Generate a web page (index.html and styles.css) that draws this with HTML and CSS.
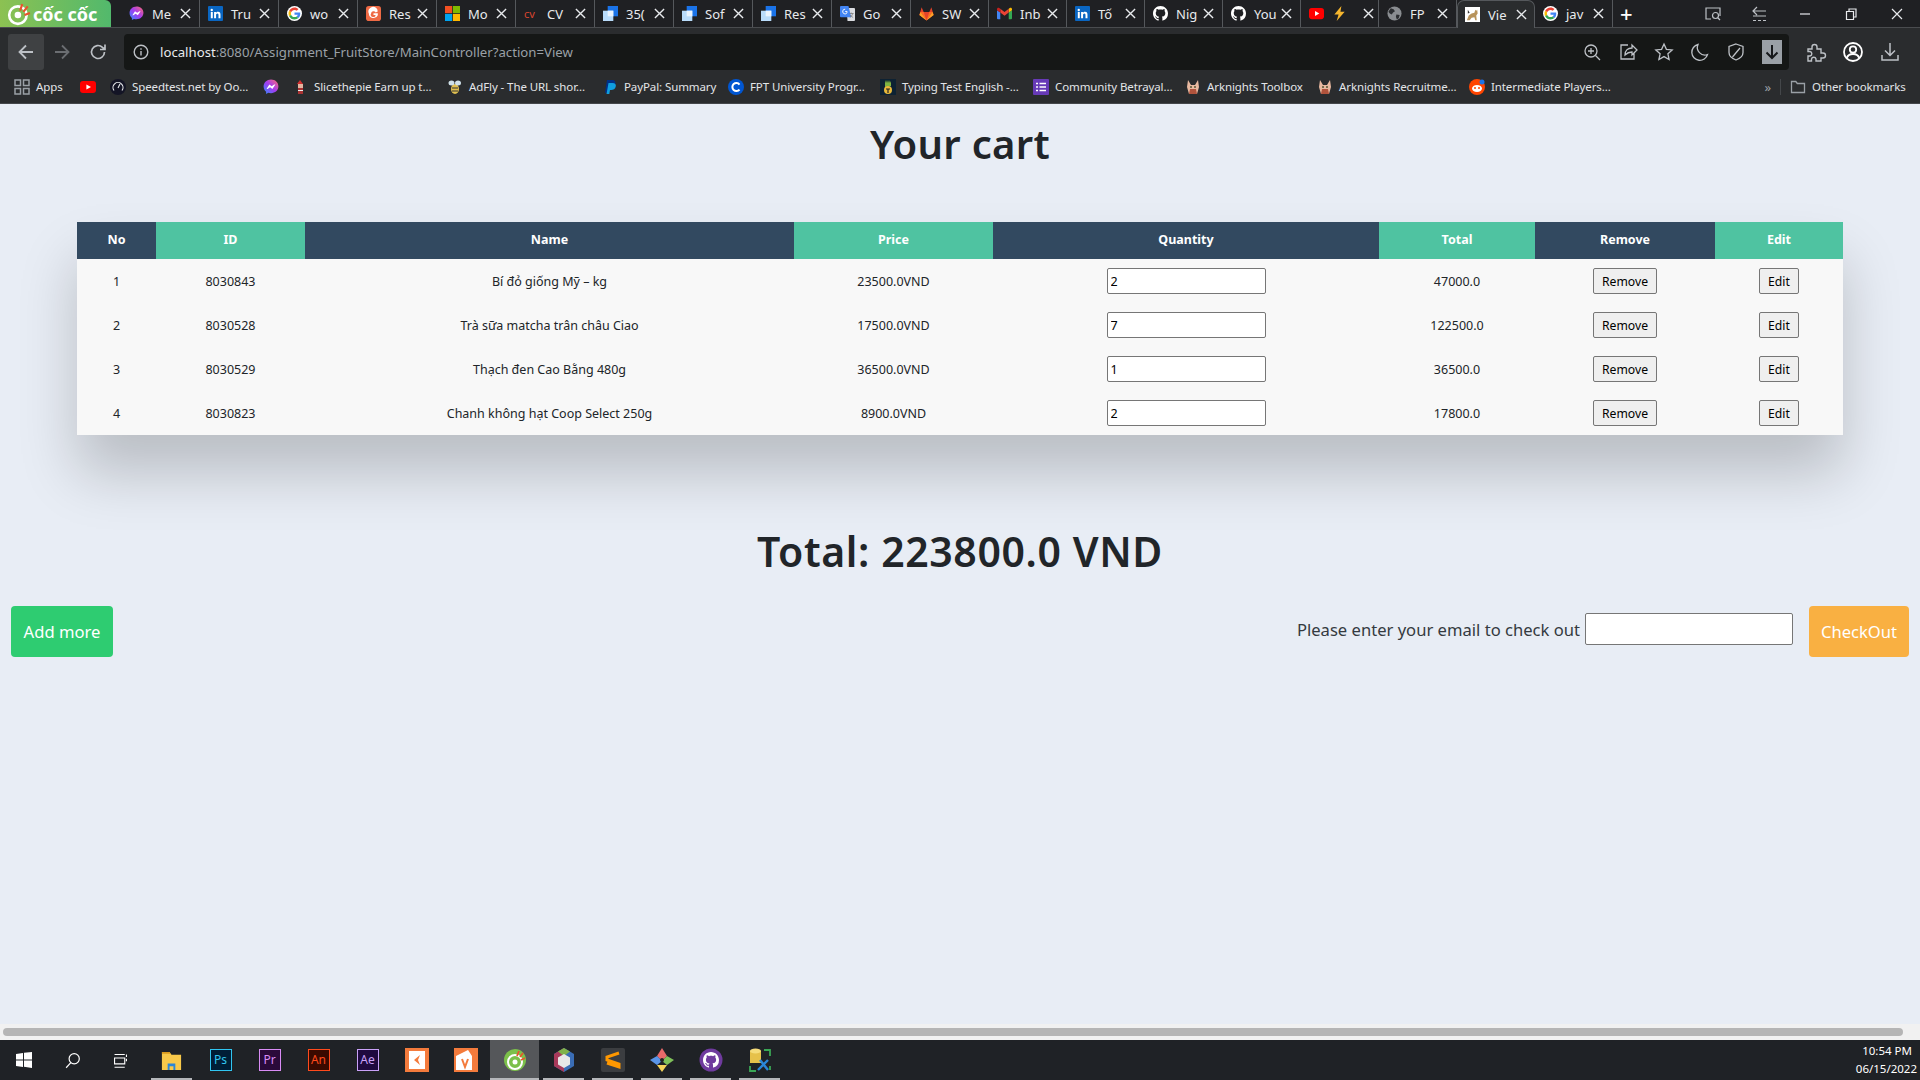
FILE: index.html
```html
<!DOCTYPE html>
<html lang="en">
<head>
    <meta charset="UTF-8">
    <meta name="viewport" content="width=device-width, initial-scale=1.0">
    <title>View cart</title>
    <link rel="stylesheet" href="styles.css">
</head>
<body>
    <svg class="sprites" width="0" height="0">
        <symbol id="x" viewBox="0 0 12 12"><path d="M1 1l10 10M11 1L1 11" stroke="#e8eaed" stroke-width="1.5" fill="none"/></symbol>
        <symbol id="messenger" viewBox="0 0 16 16"><defs><linearGradient id="mg" x1="0" y1="1" x2="1" y2="0"><stop offset="0" stop-color="#2f8cff"/><stop offset=".5" stop-color="#a33cf0"/><stop offset="1" stop-color="#ff6c70"/></linearGradient></defs><path d="M8 .5C3.8.5.6 3.5.6 7.5c0 2.2 1 4 2.5 5.2V15l2.2-1.2c.8.2 1.7.4 2.7.4 4.2 0 7.4-3 7.4-6.9S12.200.5 8 .5z" fill="url(#mg)"/><path d="M3.600 9.800l2.800-4.300 2.300 1.700 2.500-1.700 1.200.1-3 4.300-2.300-1.700-2.500 1.700z" fill="#fff"/></symbol>
        <symbol id="linkedin" viewBox="0 0 16 16"><rect width="16" height="16" rx="1" fill="#0a66c2"/><path d="M3 6.300h2.100V13H3zM4 3a1.200 1.200 0 110 2.500A1.200 1.200 0 014 3zM6.500 6.300h2v.9c.4-.6 1.100-1.100 2.200-1.100 2 0 2.600 1.300 2.600 3.100V13h-2.100V9.700c0-.9-.2-1.700-1.200-1.700s-1.400.8-1.400 1.700V13H6.500z" fill="#fff"/></symbol>
        <symbol id="google" viewBox="-6 -6 60 60"><circle cx="24" cy="24" r="30" fill="#fff"/><path fill="#EA4335" d="M24 9.500c3.540 0 6.710 1.220 9.210 3.600l6.850-6.850C35.900 2.380 30.470 0 24 0 14.620 0 6.510 5.380 2.560 13.220l7.980 6.190C12.430 13.720 17.740 9.500 24 9.500z"/><path fill="#4285F4" d="M46.980 24.550c0-1.570-.15-3.090-.38-4.550H24v9.020h12.940c-.58 2.960-2.260 5.480-4.780 7.180l7.730 6c4.510-4.180 7.090-10.360 7.090-17.650z"/><path fill="#FBBC05" d="M10.530 28.590c-.48-1.450-.76-2.990-.76-4.590s.27-3.140.76-4.590l-7.980-6.190C.92 16.460 0 20.120 0 24c0 3.880.92 7.540 2.560 10.780l7.970-6.190z"/><path fill="#34A853" d="M24 48c6.480 0 11.930-2.130 15.890-5.810l-7.730-6c-2.150 1.450-4.920 2.300-8.160 2.300-6.260 0-11.570-4.220-13.470-9.910l-7.980 6.190C6.510 42.620 14.620 48 24 48z"/></symbol>
        <symbol id="resume" viewBox="0 0 16 16"><rect width="16" height="16" rx="3" fill="#ee6a45"/><path d="M12.500 5.800A5 5 0 103 8a5 5 0 009.600 1.800V7.600H8v1.900h2.300A2.600 2.600 0 115.400 8a2.600 2.600 0 014.900-1.100z" fill="#fff"/></symbol>
        <symbol id="microsoft" viewBox="0 0 16 16"><path fill="#f25022" d="M0 0h7.600v7.600H0z"/><path fill="#7fba00" d="M8.400 0H16v7.600H8.400z"/><path fill="#00a4ef" d="M0 8.400h7.600V16H0z"/><path fill="#ffb900" d="M8.400 8.400H16V16H8.400z"/></symbol>
        <symbol id="docs" viewBox="0 0 16 16"><path fill="#1a73e8" d="M5 0h11v11H5z"/><path fill="#b9dcfb" d="M0 5h11v11H0z"/><path fill="#eaf4fe" d="M5 5h6v6H5z"/></symbol>
        <symbol id="translate" viewBox="0 0 16 16"><path fill="#dadce0" d="M7 2h8a1 1 0 011 1v12a1 1 0 01-1 1H8z"/><path fill="#4285f4" d="M1 0h8l3 12H1a1 1 0 01-1-1V1a1 1 0 011-1z"/><path d="M5.500 3.400a2.500 2.500 0 102 3.800V5.800H5.500" stroke="#fff" fill="none"/><path d="M10 8h4.500M12 7v1M13.500 8c-.4 2-1.800 3.600-3 4.200M10.800 9.500c.7 1.200 2 2.200 3.200 2.700" stroke="#777" stroke-width=".8" fill="none"/></symbol>
        <symbol id="gitlab" viewBox="0 0 16 16"><path fill="#e24329" d="M8 15.500L.4 9.500 2.800 1.200 5 6.500h6l2.200-5.300 2.400 8.300z"/><path fill="#fc6d26" d="M8 15.500L5 6.500H1.600zM8 15.500l3-9h3.400z"/><path fill="#fca326" d="M.4 9.500L8 15.500 1.600 6.500zM15.600 9.500L8 15.500l6.400-9z"/></symbol>
        <symbol id="gmail" viewBox="0 0 16 16"><path fill="#4285f4" d="M1 14h2.500V7L0 4.500V13a1 1 0 001 1z"/><path fill="#34a853" d="M12.500 14H15a1 1 0 001-1V4.500L12.500 7z"/><path fill="#fbbc04" d="M12.500 3v4L16 4.500V3.200c0-1.200-1.400-1.900-2.400-1.100z"/><path fill="#ea4335" d="M3.500 7V3L8 6.400 12.500 3v4L8 10.400z"/><path fill="#c5221f" d="M0 3.200v1.300L3.500 7V3L2.400 2.100C1.400 1.300 0 2 0 3.200z"/></symbol>
        <symbol id="github" viewBox="0 0 16 16"><path fill="#fff" d="M8 0C3.580 0 0 3.580 0 8c0 3.540 2.290 6.530 5.470 7.590.4.070.55-.17.55-.38 0-.19-.01-.82-.01-1.490-2.010.37-2.530-.49-2.690-.94-.09-.23-.48-.94-.82-1.130-.28-.15-.68-.52-.01-.53.63-.01 1.080.58 1.230.82.720 1.210 1.870.87 2.330.66.070-.52.28-.87.51-1.070-1.780-.2-3.640-.89-3.640-3.950 0-.87.31-1.590.82-2.150-.08-.2-.36-1.020.08-2.120 0 0 .67-.21 2.200.82.64-.18 1.320-.27 2-.27.68 0 1.360.09 2 .27 1.530-1.040 2.200-.82 2.200-.82.44 1.100.16 1.920.08 2.120.51.56.82 1.270.82 2.150 0 3.070-1.870 3.750-3.650 3.950.29.25.54.73.54 1.480 0 1.070-.01 1.930-.01 2.200 0 .21.15.46.55.38A8.013 8.013 0 0016 8c0-4.420-3.580-8-8-8z"/></symbol>
        <symbol id="youtube" viewBox="0 0 16 16"><rect y="2" width="16" height="12" rx="3" fill="#f00"/><path d="M6.400 5.400L11 8l-4.600 2.600z" fill="#fff"/></symbol>
        <symbol id="bolt" viewBox="0 0 16 16"><path d="M10 0L2.500 9H7l-2 7 8.500-10H9z" fill="#f5b52e"/></symbol>
        <symbol id="globe" viewBox="0 0 16 16"><circle cx="8" cy="8" r="7.500" fill="#8a8d91"/><path d="M4 2.500l3 1 1.500 2-2 1.500-1.500 2L3 8 1.500 6zM10 9l3.500.5-1 3.500-2 1.500-1-3z" fill="#2b2d30"/></symbol>
        <symbol id="tomcat" viewBox="0 0 16 16"><rect width="16" height="16" fill="#fff"/><path d="M2 14l2-5 3-2 3-1 1-3 1 1 1-1 .5 4-1.500 2 .5 5h-1.500l-1-3-3 .5-2 2.500z" fill="#b8935a"/><path d="M3 3l2 3-2 1z" fill="#333"/></symbol>
        <symbol id="folder" viewBox="0 0 16 16"><path d="M1.500 2.500h4.300l1.500 2h7.200v9h-13z" fill="none" stroke="#9aa0a6" stroke-width="1.300"/></symbol>
        <symbol id="fox" viewBox="0 0 16 16"><path d="M3 1l3 5h4l3-5 1 7-2 7H4L2 8z" fill="#e8b9a0"/><path d="M4 15l1-5h6l1 5z" fill="#b0533c"/><circle cx="6" cy="8" r="1" fill="#553"/><circle cx="10" cy="8" r="1" fill="#553"/></symbol>
    </svg>

    <div class="browser">
        <header class="tabstrip">
            <div class="logo">
                <svg width="24" height="24" viewBox="0 0 22 22"><circle cx="10" cy="12" r="8" fill="none" stroke="#fff" stroke-width="2.400"/><circle cx="10" cy="12" r="3" fill="#fff"/><path d="M12 8l2-6M15 9l4-5M16 12l5-2" stroke="#e8542d" stroke-width="2"/></svg>
                <span>cốc cốc</span>
            </div>
            <div class="tabs">
                <div class="tab"><svg class="fav"><use href="#messenger"/></svg><span class="tab-title">Me</span><svg class="close"><use href="#x"/></svg></div>
                <div class="tab"><svg class="fav"><use href="#linkedin"/></svg><span class="tab-title">Tru</span><svg class="close"><use href="#x"/></svg></div>
                <div class="tab"><svg class="fav"><use href="#google"/></svg><span class="tab-title">wo</span><svg class="close"><use href="#x"/></svg></div>
                <div class="tab"><svg class="fav"><use href="#resume"/></svg><span class="tab-title">Res</span><svg class="close"><use href="#x"/></svg></div>
                <div class="tab"><svg class="fav"><use href="#microsoft"/></svg><span class="tab-title">Mo</span><svg class="close"><use href="#x"/></svg></div>
                <div class="tab"><span class="fav fav-cv">cv</span><span class="tab-title">CV</span><svg class="close"><use href="#x"/></svg></div>
                <div class="tab"><svg class="fav"><use href="#docs"/></svg><span class="tab-title">35(</span><svg class="close"><use href="#x"/></svg></div>
                <div class="tab"><svg class="fav"><use href="#docs"/></svg><span class="tab-title">Sof</span><svg class="close"><use href="#x"/></svg></div>
                <div class="tab"><svg class="fav"><use href="#docs"/></svg><span class="tab-title">Res</span><svg class="close"><use href="#x"/></svg></div>
                <div class="tab"><svg class="fav"><use href="#translate"/></svg><span class="tab-title">Go</span><svg class="close"><use href="#x"/></svg></div>
                <div class="tab"><svg class="fav"><use href="#gitlab"/></svg><span class="tab-title">SW</span><svg class="close"><use href="#x"/></svg></div>
                <div class="tab"><svg class="fav"><use href="#gmail"/></svg><span class="tab-title">Inb</span><svg class="close"><use href="#x"/></svg></div>
                <div class="tab"><svg class="fav"><use href="#linkedin"/></svg><span class="tab-title">Tố</span><svg class="close"><use href="#x"/></svg></div>
                <div class="tab"><svg class="fav"><use href="#github"/></svg><span class="tab-title">Nig</span><svg class="close"><use href="#x"/></svg></div>
                <div class="tab"><svg class="fav"><use href="#github"/></svg><span class="tab-title">You</span><svg class="close"><use href="#x"/></svg></div>
                <div class="tab"><svg class="fav"><use href="#youtube"/></svg><svg class="fav"><use href="#bolt"/></svg><span class="tab-title"></span><svg class="close"><use href="#x"/></svg></div>
                <div class="tab"><svg class="fav"><use href="#globe"/></svg><span class="tab-title">FP</span><svg class="close"><use href="#x"/></svg></div>
                <div class="tab active"><svg class="fav"><use href="#tomcat"/></svg><span class="tab-title">Vie</span><svg class="close"><use href="#x"/></svg></div>
                <div class="tab"><svg class="fav"><use href="#google"/></svg><span class="tab-title">jav</span><svg class="close"><use href="#x"/></svg></div>
            </div>
            <span class="newtab">+</span>
            <div class="winbtns">
                <svg width="20" height="20" viewBox="0 0 20 20" fill="none" stroke="#bdc1c6" stroke-width="1.200"><path d="M8 15H3V4h14v8"/><circle cx="12.500" cy="11.500" r="3"/><path d="M15 14l2 2"/></svg>
                <svg width="20" height="20" viewBox="0 0 20 20" fill="none" stroke="#bdc1c6" stroke-width="1.200"><path d="M8 3L4 7l4 4M4 7h13M4 12h13M4 16.500h3M9 16.500h3M14 16.500h3"/></svg>
                <svg width="20" height="20" viewBox="0 0 20 20" fill="none" stroke="#e8eaed" stroke-width="1.200"><path d="M5 10h10"/></svg>
                <svg width="20" height="20" viewBox="0 0 20 20" fill="none" stroke="#e8eaed" stroke-width="1.200"><path d="M5.500 7.500h7v8h-7zM8 7.500V5h7v8h-2.500"/></svg>
                <svg width="20" height="20" viewBox="0 0 20 20" fill="none" stroke="#e8eaed" stroke-width="1.200"><path d="M5 5l10 10M15 5L5 15"/></svg>
            </div>
        </header>

        <div class="toolbar">
            <div class="navbtn navbtn-back">
                <svg width="20" height="20" viewBox="0 0 20 20" fill="none" stroke="#bdc1c6" stroke-width="1.800"><path d="M17 10H4M10 3.500L3.500 10l6.500 6.500"/></svg>
            </div>
            <div class="navbtn">
                <svg width="20" height="20" viewBox="0 0 20 20" fill="none" stroke="#6b6e72" stroke-width="1.800"><path d="M3 10h13M10 3.500l6.500 6.500-6.500 6.500"/></svg>
            </div>
            <div class="navbtn">
                <svg width="20" height="20" viewBox="0 0 20 20" fill="none" stroke="#bdc1c6" stroke-width="1.700"><path d="M16.500 10a6.500 6.500 0 11-2-4.700L17 7.500M17 2.500v5h-5"/></svg>
            </div>
            <div class="omnibox">
                <svg class="info" width="16" height="16" viewBox="0 0 16 16" fill="none" stroke="#bdc1c6" stroke-width="1.400"><circle cx="8" cy="8" r="6.800"/><path d="M8 7v4.500M8 4.200v1.500"/></svg>
                <span class="url"><b>localhost</b>:8080/Assignment_FruitStore/MainController?action=View</span>
                <div class="omni-icons">
                    <svg width="20" height="20" viewBox="0 0 20 20" fill="none" stroke="#bdc1c6" stroke-width="1.300"><circle cx="9" cy="9" r="6"/><path d="M13.500 13.500L18 18M6 9h6M9 6v6"/></svg>
                    <svg width="20" height="20" viewBox="0 0 20 20" fill="none" stroke="#bdc1c6" stroke-width="1.300"><path d="M10 3H3v14h13v-6M7 13c0-5 3-7 7-7V3l5 5-5 5v-3c-3 0-5 1-7 3z"/></svg>
                    <svg width="20" height="20" viewBox="0 0 20 20" fill="none" stroke="#bdc1c6" stroke-width="1.300"><path d="M10 2l2.400 5.300 5.800.6-4.300 3.900 1.200 5.700-5.100-2.900-5.100 2.900 1.200-5.700L1.800 7.900l5.800-.6z"/></svg>
                    <svg width="20" height="20" viewBox="0 0 20 20" fill="none" stroke="#bdc1c6" stroke-width="1.300"><path d="M8 2.500a8 8 0 109.500 10A7.500 7.500 0 018 2.500z"/></svg>
                    <svg width="20" height="20" viewBox="0 0 20 20" fill="none" stroke="#bdc1c6" stroke-width="1.300"><path d="M10 2l7 2.500v6c0 3.500-3 6-7 7.500-4-1.500-7-4-7-7.500v-6zM14 6L6.500 15"/></svg>
                    <div class="dl-box"><svg width="20" height="20" viewBox="0 0 20 20" fill="none" stroke="#16181a" stroke-width="2"><path d="M10 3v13M4.500 10.500L10 16l5.500-5.500"/></svg></div>
                </div>
            </div>
            <div class="ext-icons">
                <svg width="22" height="22" viewBox="0 0 22 22" fill="none" stroke="#bdc1c6" stroke-width="1.400"><path d="M3 8h4V6a2.500 2.500 0 015 0v2h4v4h2a2.500 2.500 0 010 5h-2v3H11v-2a2.300 2.300 0 00-4.500 0v2H3v-5h2a2.300 2.300 0 000-4.500H3z"/></svg>
                <svg width="22" height="22" viewBox="0 0 22 22" fill="none" stroke="#fff" stroke-width="1.800"><circle cx="11" cy="11" r="9"/><circle cx="11" cy="8.500" r="3.200"/><path d="M4.800 17c1-3 3.500-4 6.200-4s5.200 1 6.200 4"/></svg>
                <svg width="22" height="22" viewBox="0 0 22 22" fill="none" stroke="#bdc1c6" stroke-width="1.500"><path d="M11 2v12M6 9.500l5 5 5-5M3 14v5h16v-5"/></svg>
            </div>
        </div>

        <nav class="bookmarks">
            <a class="bm"><svg class="bm-icon" viewBox="0 0 16 16" fill="none" stroke="#9aa0a6" stroke-width="1.500"><rect x="1" y="1" width="5.500" height="5.500"/><rect x="9.500" y="1" width="5.500" height="5.500"/><rect x="1" y="9.500" width="5.500" height="5.500"/><rect x="9.500" y="9.500" width="5.500" height="5.500"/></svg>Apps</a>
            <a class="bm"><svg class="bm-icon"><use href="#youtube"/></svg></a>
            <a class="bm"><svg class="bm-icon" viewBox="0 0 16 16"><circle cx="8" cy="8" r="8" fill="#141526"/><path d="M4 11.500a5 5 0 118 0M8 9l2-4" fill="none" stroke="#e8eaed" stroke-width="1.100"/></svg>Speedtest.net by Oo...</a>
            <a class="bm"><svg class="bm-icon"><use href="#messenger"/></svg></a>
            <a class="bm"><svg class="bm-icon" viewBox="0 0 16 16"><rect x="6" y="5" width="5" height="4" fill="#e5b5a0"/><path d="M5 5l3-4 3 4z" fill="#d32f2f"/><rect x="6" y="9" width="5" height="6" fill="#a33"/><rect x="6" y="11" width="5" height="1" fill="#eee"/></svg>Slicethepie Earn up t...</a>
            <a class="bm"><svg class="bm-icon" viewBox="0 0 16 16"><ellipse cx="8" cy="10" rx="4" ry="5" fill="#e0c050"/><path d="M5 9h6M5 12h6" stroke="#333"/><ellipse cx="4.500" cy="4" rx="3" ry="2.500" fill="#cfe0e8"/><ellipse cx="11" cy="4" rx="3" ry="2.500" fill="#cfe0e8"/></svg>AdFly - The URL shor...</a>
            <a class="bm"><svg class="bm-icon" viewBox="0 0 16 16"><path d="M5 1h5c3 0 4 2 3.300 4.300C12.700 8 11 8.800 8.500 8.800H7l-1 5H3z" fill="#003087"/><path d="M6.500 4h4c2.500 0 4 1.300 3.200 3.800-.6 2.300-2.300 3.200-4.500 3.200H8l-.7 4H4.500z" fill="#0f9ee0"/></svg>PayPal: Summary</a>
            <a class="bm"><svg class="bm-icon" viewBox="0 0 16 16"><circle cx="8" cy="8" r="8" fill="#0056d2"/><path d="M11.500 5.500a4 4 0 100 5" fill="none" stroke="#fff" stroke-width="2"/></svg>FPT University Progr...</a>
            <a class="bm"><svg class="bm-icon" viewBox="0 0 16 16"><rect width="16" height="16" fill="#0d2233"/><path d="M5 8V1l1 3 1-3 1 3 1-3 1 3 1-2v5z" fill="#7cb342"/><circle cx="8" cy="11" r="4" fill="#e8b83a"/><path d="M6 10h4M8 10v4" stroke="#222" stroke-width="1.200"/></svg>Typing Test English -...</a>
            <a class="bm"><svg class="bm-icon" viewBox="0 0 16 16"><rect width="16" height="16" rx="1" fill="#673ab7"/><path d="M6.500 4.500H13M6.500 8H13M6.500 11.500H13M3 4.500h2M3 8h2M3 11.500h2" stroke="#fff" stroke-width="1.500"/></svg>Community Betrayal...</a>
            <a class="bm"><svg class="bm-icon"><use href="#fox"/></svg>Arknights Toolbox</a>
            <a class="bm"><svg class="bm-icon"><use href="#fox"/></svg>Arknights Recruitme...</a>
            <a class="bm"><svg class="bm-icon" viewBox="0 0 16 16"><circle cx="8" cy="8" r="8" fill="#ff4500"/><ellipse cx="8" cy="9.500" rx="5" ry="3.500" fill="#fff"/><circle cx="6" cy="9" r="1" fill="#ff4500"/><circle cx="10" cy="9" r="1" fill="#ff4500"/><circle cx="13" cy="3" r="2.500" fill="#1a73e8"/></svg>Intermediate Players...</a>
            <span class="bm-more">»</span>
            <a class="bm bm-other"><svg class="bm-icon"><use href="#folder"/></svg>Other bookmarks</a>
        </nav>

        <main class="page">
            <h1 class="page-title">Your cart</h1>

            <div class="table-wrapper">
                <table class="cart-table">
                    <colgroup>
                        <col class="col-no"><col class="col-id"><col class="col-name"><col class="col-price">
                        <col class="col-qty"><col class="col-total"><col class="col-remove"><col class="col-edit">
                    </colgroup>
                    <thead>
                        <tr><th>No</th><th>ID</th><th>Name</th><th>Price</th><th>Quantity</th><th>Total</th><th>Remove</th><th>Edit</th></tr>
                    </thead>
                    <tbody>
                        <tr>
                            <td>1</td><td>8030843</td><td>Bí đỏ giống Mỹ – kg</td><td>23500.0VND</td>
                            <td><input class="qty" type="text" value="2"></td><td>47000.0</td>
                            <td><button class="row-btn">Remove</button></td><td><button class="row-btn">Edit</button></td>
                        </tr>
                        <tr>
                            <td>2</td><td>8030528</td><td>Trà sữa matcha trân châu Ciao</td><td>17500.0VND</td>
                            <td><input class="qty" type="text" value="7"></td><td>122500.0</td>
                            <td><button class="row-btn">Remove</button></td><td><button class="row-btn">Edit</button></td>
                        </tr>
                        <tr>
                            <td>3</td><td>8030529</td><td>Thạch đen Cao Bằng 480g</td><td>36500.0VND</td>
                            <td><input class="qty" type="text" value="1"></td><td>36500.0</td>
                            <td><button class="row-btn">Remove</button></td><td><button class="row-btn">Edit</button></td>
                        </tr>
                        <tr>
                            <td>4</td><td>8030823</td><td>Chanh không hạt Coop Select 250g</td><td>8900.0VND</td>
                            <td><input class="qty" type="text" value="2"></td><td>17800.0</td>
                            <td><button class="row-btn">Remove</button></td><td><button class="row-btn">Edit</button></td>
                        </tr>
                    </tbody>
                </table>
            </div>

            <h1 class="cart-total">Total: 223800.0 VND</h1>

            <div class="actions">
                <button class="btn btn-add">Add more</button>
                <form class="checkout">
                    <label for="email">Please enter your email to check out</label>
                    <input id="email" class="email" type="text">
                    <button class="btn btn-checkout" type="button">CheckOut</button>
                </form>
            </div>
        </main>

        <div class="hscroll"><div class="hscroll-thumb"></div></div>

        <footer class="taskbar">
            <div class="task task-sys"><svg width="20" height="20" viewBox="0 0 20 20" fill="#fff"><path d="M2 4l7-1v6.500H2zM10 2.800L18 2v7.500h-8zM2 10.500h7V17l-7-1zM10 10.500h8V18l-8-1.200z"/></svg></div>
            <div class="task task-sys"><svg width="17" height="17" viewBox="0 0 20 20" fill="none" stroke="#fff" stroke-width="1.400"><circle cx="12" cy="8" r="6"/><path d="M8 12.500L2.500 18.500"/></svg></div>
            <div class="task task-sys"><svg width="17" height="17" viewBox="0 0 20 20" fill="none" stroke="#fff" stroke-width="1.300"><path d="M3 7h12v7H3zM3 3h12M3 18h12M17 3v3M17 8v3"/></svg></div>
            <div class="task task-open"><svg width="23" height="23" viewBox="0 0 24 24"><path d="M2 3h8l2 3h10v16H2z" fill="#f8c94a"/><path d="M2 3h8l1 2H2z" fill="#d99a1e"/><path d="M8 22v-7h8v7h-2v-4h-4v4z" fill="#2a86d8"/></svg></div>
            <div class="task"><span class="adobe adobe-ps">Ps</span></div>
            <div class="task"><span class="adobe adobe-pr">Pr</span></div>
            <div class="task"><span class="adobe adobe-an">An</span></div>
            <div class="task"><span class="adobe adobe-ae">Ae</span></div>
            <div class="task"><svg width="24" height="24" viewBox="0 0 24 24"><rect width="24" height="24" fill="#f47b3c"/><rect x="4" y="3" width="16" height="18" fill="#fff"/><path d="M15 7l-6 5 6 5-2-5z" fill="#f47b3c"/></svg></div>
            <div class="task"><svg width="24" height="24" viewBox="0 0 24 24"><rect width="24" height="24" fill="#f47b3c"/><path d="M2 8l12-6 4 6v14H2z" fill="#fff"/><path d="M8 11l3 8 3-8" stroke="#f47b3c" stroke-width="2" fill="none"/></svg></div>
            <div class="task task-active task-open"><svg width="24" height="24" viewBox="0 0 24 24"><circle cx="12" cy="12" r="11" fill="#7cc04a"/><circle cx="12" cy="14" r="7" fill="none" stroke="#fff" stroke-width="2"/><circle cx="12" cy="14" r="2.500" fill="#fff"/><path d="M14 8l2-5M17 9l3-4M18 12l4-2" stroke="#e8542d" stroke-width="1.800"/></svg></div>
            <div class="task task-open"><svg width="24" height="24" viewBox="0 0 24 24"><path d="M12 0l10 6v12l-10 6L2 18V6z" fill="#3a6db5"/><path d="M12 0L2 6v12l10 6z" fill="#a83a5a"/><path d="M12 0l6 3.500L12 8 6 3.500z" fill="#7fb24a"/><path d="M12 6l6 3.500v7L12 20l-6-3.500v-7z" fill="#e8e8e8"/></svg></div>
            <div class="task task-open"><svg width="24" height="24" viewBox="0 0 24 24"><rect width="24" height="24" rx="2" fill="#3b3d40"/><path d="M18 5L6 9v3l12 4v3L6 15" fill="none" stroke="#ff9800" stroke-width="3"/></svg></div>
            <div class="task task-open"><svg width="26" height="26" viewBox="0 0 26 26"><path d="M13 1l5 8-5 5-5-5z" fill="#e86a6a"/><path d="M13 14l5-5 7 4-7 5z" fill="#7fc15a"/><path d="M8 9l5 5-5 4-7-5z" fill="#5a95e8"/><path d="M8 18h10l-5 7z" fill="#f5d45a"/><circle cx="13" cy="13" r="2" fill="#222"/></svg></div>
            <div class="task task-open"><svg width="24" height="24" viewBox="0 0 24 24"><circle cx="12" cy="12" r="11.500" fill="#6f3b9e"/><svg x="4" y="4" width="16" height="16"><use href="#github"/></svg></svg></div>
            <div class="task task-open"><svg width="24" height="24" viewBox="0 0 24 24"><path d="M2 3h11v12H2z" fill="#e6c14a"/><ellipse cx="7.500" cy="3" rx="5.500" ry="2.500" fill="#f5dc7a"/><path d="M16 2h6v6M2 18v5h6M22 18v4" stroke="#3aa655" stroke-width="1.800" fill="none"/><path d="M10 22l10-10M12 12l8 10" stroke="#2a86d8" stroke-width="2.400"/></svg></div>
            <div class="clock"><span>10:54 PM</span><span>06/15/2022</span></div>
        </footer>
    </div>
</body>
</html>
```

FILE: styles.css
```css
* {
    box-sizing: border-box;
}

body {
    margin: 0;
    font-family: "Noto Sans", "Open Sans", sans-serif;
    background-color: #e8edf5;
    color: #212529;
    overflow: hidden;
}

.sprites {
    position: absolute;
}

.browser {
    height: 100vh;
    display: flex;
    flex-direction: column;
}

/* tab strip */
.tabstrip {
    height: 28px;
    flex: none;
    display: flex;
    align-items: center;
    background-color: #1f2023;
    border-bottom: 1px solid #4a4c4f;
    color: #e8eaed;
}

.logo {
    width: 111px;
    height: 27px;
    display: flex;
    align-items: center;
    gap: 2px;
    padding-left: 7px;
    background: linear-gradient(90deg, #8cc152, #52b96c);
    border-top-right-radius: 6px;
    font-size: 18px;
    font-weight: 700;
    color: #fff;
    white-space: nowrap;
}

.tabs {
    margin-left: 10px;
    height: 27px;
    display: flex;
}

.tab {
    flex: 0 0 78px;
    min-width: 0;
    display: flex;
    align-items: center;
    gap: 8px;
    padding: 0 7px 0 8px;
    border-right: 1px solid #55585c;
}

.tab:nth-child(-n+10) {
    flex-basis: 79px;
}

.tab.active {
    background-color: #2a2c2e;
    border: 1px solid #55585c;
    border-bottom: none;
    border-radius: 7px 7px 0 0;
    height: 28px;
    padding: 0 6px 0 7px;
}

.fav {
    width: 15px;
    height: 15px;
    flex: none;
}

.fav-cv {
    font-size: 11px;
    line-height: 15px;
    color: #d9452f;
}

.tab-title {
    flex: 1;
    min-width: 0;
    white-space: nowrap;
    font-size: 13px;
}

.close {
    width: 11px;
    height: 11px;
    flex: none;
    margin-right: 1px;
}

.newtab {
    margin-left: 7px;
    font-size: 22px;
    line-height: 27px;
    font-weight: 500;
    color: #fff;
}

.winbtns {
    margin-left: auto;
    display: flex;
    gap: 26px;
    padding-right: 13px;
}

/* toolbar */
.toolbar {
    height: 42px;
    flex: none;
    display: flex;
    align-items: flex-end;
    padding-left: 8px;
    background-color: #2a2c2e;
}

.navbtn {
    width: 36px;
    height: 36px;
    display: flex;
    align-items: center;
    justify-content: center;
    border-radius: 3px;
}

.navbtn-back {
    background-color: #3f4143;
}

.omnibox {
    width: 1665px;
    height: 36px;
    margin-left: 8px;
    display: flex;
    align-items: center;
    padding-left: 9px;
    background-color: #151716;
    border-radius: 4px;
    font-size: 13.2px;
    color: #9aa0a6;
}

.url b {
    font-weight: 400;
    color: #e8eaed;
}

.info {
    margin-right: 11px;
}

.omni-icons {
    margin-left: auto;
    display: flex;
    align-items: center;
    gap: 16px;
    padding-right: 7px;
}

.dl-box {
    width: 20px;
    height: 24px;
    display: flex;
    align-items: center;
    justify-content: center;
    background-color: #9aa0a6;
}

.ext-icons {
    height: 36px;
    display: flex;
    align-items: center;
    gap: 15px;
    padding-left: 16px;
}

/* bookmarks */
.bookmarks {
    height: 34px;
    flex: none;
    display: grid;
    grid-template-columns: 66px 30px 153px 29px 155px 155px 126px 152px 153px 152px 132px 152px 157px 1fr 140px;
    align-items: center;
    padding-left: 14px;
    background-color: #2a2c2e;
    border-bottom: 1px solid #44474a;
    font-size: 11.5px;
    letter-spacing: -0.1px;
    color: #e3e5e8;
}

.bm {
    display: flex;
    align-items: center;
    gap: 6px;
    white-space: nowrap;
}

.bm-icon {
    width: 16px;
    height: 16px;
    flex: none;
}

.bm-more {
    padding-right: 9px;
    text-align: right;
    color: #9aa0a6;
    font-size: 13px;
}

.bm-other {
    padding-left: 9px;
    border-left: 1px solid #44474a;
}

/* page */
.page {
    flex: 1;
    min-height: 0;
    padding-top: 16px;
}

.page-title,
.cart-total {
    margin: 0;
    font-size: 40px;
    line-height: 48px;
    font-weight: 600;
    text-align: center;
}

.page-title {
    letter-spacing: 0.3px;
}

.table-wrapper {
    margin: 54px 77px 0;
    box-shadow: 0 38px 55px rgba(0, 0, 0, 0.2);
}

.cart-table {
    width: 100%;
    table-layout: fixed;
    border-collapse: collapse;
    font-size: 12.5px;
    background-color: #f8f8f8;
}

.col-no { width: 79px; }
.col-id { width: 149px; }
.col-name { width: 489px; }
.col-price { width: 199px; }
.col-qty { width: 386px; }
.col-total { width: 156px; }
.col-remove { width: 180px; }
.col-edit { width: 128px; }

.cart-table th {
    height: 37px;
    padding: 0 0 2px;
    font-size: 12.5px;
    font-weight: 700;
    color: #fff;
    background-color: #4fc3a1;
}

.cart-table th:nth-child(odd) {
    background-color: #324960;
}

.cart-table td {
    height: 44px;
    padding: 0;
    text-align: center;
    vertical-align: middle;
}

.qty {
    display: block;
    width: 159px;
    height: 26px;
    margin: 0 auto;
    padding: 1px 3px;
    font: inherit;
    color: #000;
    background-color: #fff;
    border: 1px solid #767676;
    border-radius: 2px;
}

.row-btn {
    height: 26px;
    padding: 0 8px;
    font: inherit;
    font-size: 12.2px;
    color: #000;
    background-color: #efefef;
    border: 1px solid #767676;
    border-radius: 2px;
}

.cart-total {
    margin-top: 92px;
    font-size: 41px;
    letter-spacing: 0.6px;
}

.actions {
    margin-top: 31px;
    padding: 0 11px;
    display: flex;
    justify-content: space-between;
    align-items: center;
}

.btn {
    height: 51px;
    border: none;
    border-radius: 4px;
    font-family: inherit;
    font-size: 16.6px;
    color: #fff;
}

.btn-add {
    width: 102px;
    background-color: #2ecc71;
}

.btn-checkout {
    width: 100px;
    margin-left: 16px;
    background-color: #f9b042;
}

.checkout {
    display: flex;
    align-items: center;
    font-size: 16.6px;
    color: #343a40;
}

.checkout label {
    margin: 0 5px 5px 0;
}

.email {
    width: 208px;
    height: 32px;
    margin-bottom: 5px;
    background-color: #fff;
    border: 1px solid #767676;
    border-radius: 2px;
}

/* horizontal scrollbar */
.hscroll {
    height: 16px;
    flex: none;
    padding: 4px 17px 4px 3px;
    background-color: #f1f1f1;
}

.hscroll-thumb {
    height: 8px;
    border-radius: 4px;
    background-color: #b5b5b5;
}

/* taskbar */
.taskbar {
    height: 40px;
    flex: none;
    display: flex;
    background-color: #1f2226;
    color: #fff;
}

.task {
    width: 49px;
    flex: none;
    display: flex;
    align-items: center;
    justify-content: center;
    position: relative;
}

.task-sys {
    width: 48px;
}

.task-sys:nth-child(3) {
    margin-right: 3px;
}

.task-open::after {
    content: "";
    position: absolute;
    left: 4px;
    right: 4px;
    bottom: 0;
    height: 2px;
    background-color: #b5b7ba;
}

.task-active {
    background-color: #55575a;
}

.task-active::after {
    left: 0;
    right: 0;
}

.adobe {
    width: 22px;
    height: 22px;
    border: 1.5px solid;
    font-size: 12px;
    line-height: 19px;
    text-align: center;
}

.adobe-ps { color: #31c5f0; background-color: #001e36; }
.adobe-pr { color: #d98cf5; background-color: #2a0a3a; }
.adobe-an { color: #ff4a1c; background-color: #3a0a00; }
.adobe-ae { color: #c9a1f7; background-color: #1f0a3f; }

.clock {
    margin-left: auto;
    display: flex;
    flex-direction: column;
    justify-content: center;
    align-items: flex-end;
    padding-right: 3px;
    font-size: 11.5px;
    line-height: 18px;
}

.clock span:first-child {
    padding-right: 5px;
}
```
